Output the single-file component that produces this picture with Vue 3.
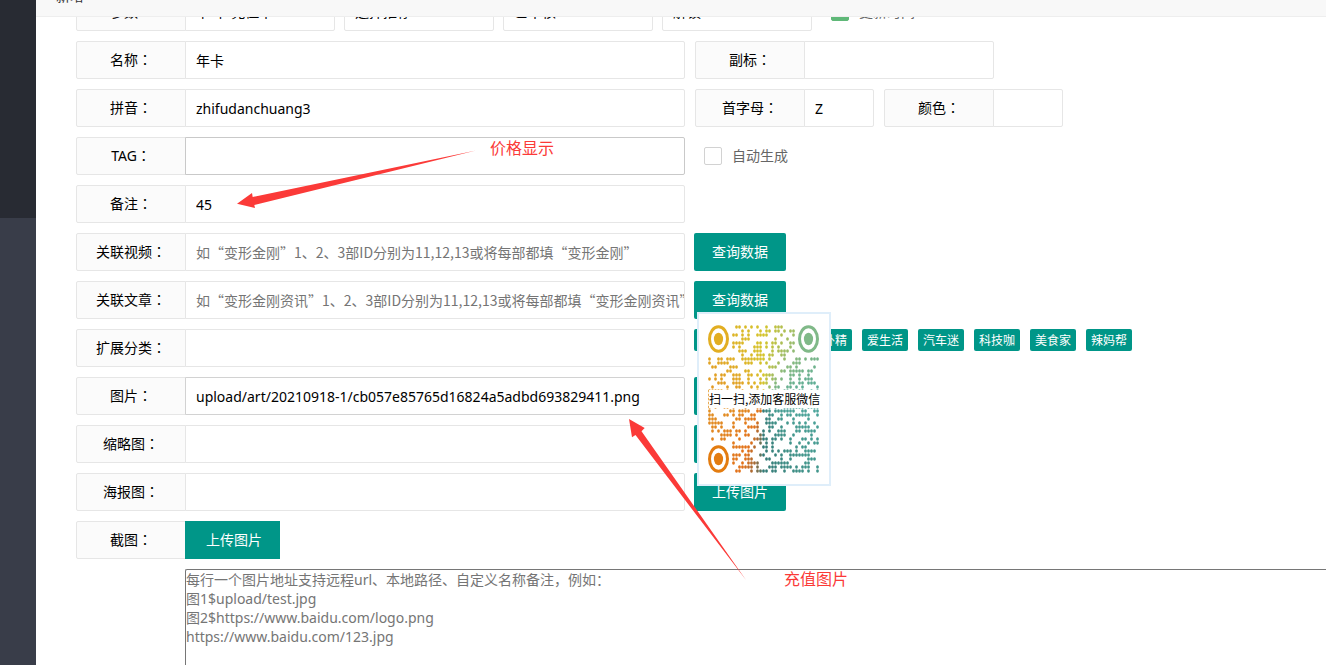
<script setup>
import { reactive } from 'vue'

const selects = [
  { id: 'type', text: '卡 卡 充值卡' },
  { id: 'level', text: '选择推荐' },
  { id: 'status', text: '已审核' },
  { id: 'lock', text: '解锁' }
]

const form = reactive({
  name: '年卡', sub: '', en: 'zhifudanchuang3', letter: 'Z', color: '', tag: '', remarks: '45',
  relVod: '', relArt: '', extend: '',
  pic: 'upload/art/20210918-1/cb057e85765d16824a5adbd693829411.png',
  thumb: '', slide: '', shots: ''
})

const related = [
  { key: 'relVod', label: '关联视频', hint: '如“变形金刚”1、2、3部ID分别为11,12,13或将每部都填“变形金刚”' },
  { key: 'relArt', label: '关联文章', hint: '如“变形金刚资讯”1、2、3部ID分别为11,12,13或将每部都填“变形金刚资讯”' }
]
const tags = ['段子手', '私房话', '八卦精', '爱生活', '汽车迷', '科技咖', '美食家', '辣妈帮']
const pictures = [
  { key: 'pic', label: '图片', active: true },
  { key: 'thumb', label: '缩略图' },
  { key: 'slide', label: '海报图' }
]
const shotsHint = '每行一个图片地址支持远程url、本地路径、自定义名称备注，例如：\n图1$upload/test.jpg\n图2$https://www.baidu.com/logo.png\nhttps://www.baidu.com/123.jpg'

// Colour wheel of the code: clockwise stops, degrees from twelve o'clock.
const stops = [
  [0, [212, 196, 42]], [45, [135, 185, 125]], [90, [78, 168, 158]], [135, [66, 150, 140]],
  [180, [52, 122, 118]], [190, [160, 105, 55]], [202, [226, 112, 24]], [270, [226, 148, 36]],
  [315, [224, 174, 36]], [360, [212, 196, 42]]
]
function wheel(x, y) {
  const a = (Math.atan2(x - 18, 18 - y) * 180 / Math.PI + 360) % 360
  const i = stops.findIndex((s, k) => k && a <= s[0])
  const [a0, c0] = stops[i - 1]
  const [a1, c1] = stops[i]
  const t = (a - a0) / (a1 - a0)
  return `rgb(${c0.map((c, k) => Math.round(c + (c1[k] - c) * t)).join(',')})`
}
const dots = []
let seed = 2021
for (let y = 0; y < 37; y++) {
  for (let x = 0; x < 37; x++) {
    seed = (seed * 16807) % 2147483647
    const eye = (x < 8 && y < 8) || (x > 28 && y < 8) || (x < 8 && y > 28)
    if (!eye && seed / 2147483647 < 0.49) dots.push({ x: x * 3 + 1.5, y: y * 4 + 2, fill: wheel(x, y) })
  }
}
const eyes = [
  { x: 10.5, y: 14, color: '#e2ae22' },
  { x: 100.5, y: 14, color: '#80b988' },
  { x: 10.5, y: 134, color: '#e37c10' }
]
</script>

<template>
  <div class="shell">
    <aside class="side"><div class="side-menu"></div></aside>
    <main class="main">
      <header class="title">新增</header>
      <div class="viewport">
        <form class="form" @submit.prevent>
          <div class="row tight">
            <div class="field">
              <label class="label" for="type">参数<span class="colon">：</span></label>
              <select id="type" class="input w150"><option>{{ selects[0].text }}</option></select>
            </div>
            <select v-for="s in selects.slice(1)" :id="s.id" :key="s.id" class="input w150" :aria-label="s.text">
              <option>{{ s.text }}</option>
            </select>
            <label class="check"><input type="checkbox" checked>更新时间</label>
          </div>

          <div class="row">
            <div class="field wide"><label class="label" for="name">名称<span class="colon">：</span></label><input id="name" v-model="form.name" class="input"></div>
            <div class="field"><label class="label" for="sub">副标<span class="colon">：</span></label><input id="sub" v-model="form.sub" class="input w190"></div>
          </div>
          <div class="row">
            <div class="field wide"><label class="label" for="en">拼音<span class="colon">：</span></label><input id="en" v-model="form.en" class="input"></div>
            <div class="field"><label class="label" for="letter">首字母<span class="colon">：</span></label><input id="letter" v-model="form.letter" class="input w70"></div>
            <div class="field"><label class="label" for="color">颜色<span class="colon">：</span></label><input id="color" v-model="form.color" class="input w70"></div>
          </div>
          <div class="row tight">
            <div class="field wide"><label class="label" for="tag">TAG<span class="colon">：</span></label><input id="tag" v-model="form.tag" class="input hover"></div>
            <label class="check"><input type="checkbox">自动生成</label>
          </div>
          <div class="row">
            <div class="field wide"><label class="label" for="remarks">备注<span class="colon">：</span></label><input id="remarks" v-model="form.remarks" class="input"></div>
          </div>
          <div v-for="r in related" :key="r.key" class="row tight">
            <div class="field wide">
              <label class="label" :for="r.key">{{ r.label }}<span class="colon">：</span></label>
              <input :id="r.key" v-model="form[r.key]" class="input cjk" :placeholder="r.hint">
            </div>
            <button type="button" class="btn">查询数据</button>
          </div>
          <div class="row tight">
            <div class="field wide"><label class="label" for="extend">扩展分类<span class="colon">：</span></label><input id="extend" v-model="form.extend" class="input"></div>
            <div class="tags"><button v-for="t in tags" :key="t" type="button" class="tag">{{ t }}</button></div>
          </div>
          <div v-for="p in pictures" :key="p.key" class="row tight">
            <div class="field wide">
              <label class="label" :for="p.key">{{ p.label }}<span class="colon">：</span></label>
              <input :id="p.key" v-model="form[p.key]" class="input" :class="{ focus: p.active }">
            </div>
            <button type="button" class="btn">上传图片</button>
          </div>
          <div class="row">
            <div class="field"><label class="label" for="shots">截图<span class="colon">：</span></label><button type="button" class="btn joined">上传图片</button></div>
          </div>
          <textarea id="shots" v-model="form.shots" class="area" :placeholder="shotsHint"></textarea>
        </form>
      </div>
    </main>

    <div class="qr">
      <svg class="code" viewBox="0 0 111 148" width="111" height="148" aria-hidden="true">
        <ellipse v-for="(d, i) in dots" :key="i" :cx="d.x" :cy="d.y" rx="1.4" ry="1.8" :fill="d.fill" />
        <g v-for="e in eyes" :key="e.color">
          <ellipse :cx="e.x" :cy="e.y" rx="9" ry="12.3" fill="none" :stroke="e.color" stroke-width="3" />
          <ellipse :cx="e.x" :cy="e.y" rx="4.6" ry="6.2" :fill="e.color" />
        </g>
      </svg>
      <span class="qr-text">扫一扫,添加客服微信</span>
    </div>

    <svg class="arrow price" viewBox="237 150 240 60" width="240" height="60" aria-hidden="true">
      <path d="M237 203.7 252 193 252.7 197 476 150.5 254.3 205 255 208Z" />
    </svg>
    <span class="note price-note">价格显示</span>
    <svg class="arrow image" viewBox="628 418 120 164" width="120" height="164" aria-hidden="true">
      <path d="M629 419 644.7 428 641.5 431.3 746 580 635.5 435 632 437.3Z" />
    </svg>
    <span class="note image-note">充值图片</span>
  </div>
</template>

<style>
body { margin: 0; background: #fff; }
</style>

<style scoped>
.shell {
  position: relative;
  display: flex;
  height: 100vh;
  overflow: hidden;
  font: 14px/20px "Noto Sans", "Noto Sans CJK SC", sans-serif;
  color: #000;
}
.shell * { box-sizing: border-box; }
.side { flex: 0 0 36px; background: #393d49; }
.side-menu { height: 218px; background: #282b33; }
.main { flex: 1; min-width: 0; display: flex; flex-direction: column; }
.title {
  flex: none;
  height: 42px;
  margin-top: -25px;
  padding-left: 20px;
  line-height: 42px;
  color: #333;
  background: #f8f8f8;
  border-bottom: 1px solid #eee;
}
.viewport { flex: 1; min-height: 0; overflow: hidden; }
.form { margin-top: -24px; padding-left: 40px; }
.row { display: flex; gap: 10px; margin-bottom: 10px; }
.tight { gap: 9px; }
.field { display: flex; }
.wide { flex: 0 0 609px; }
.label {
  flex: 0 0 110px;
  height: 38px;
  margin-right: -1px;
  line-height: 36px;
  text-align: center;
  white-space: nowrap;
  background: #fbfbfb;
  border: 1px solid #e6e6e6;
  border-radius: 2px 0 0 2px;
}
.colon { font-family: "Noto Sans CJK TC", sans-serif; line-height: 20px; }
.input {
  flex: 1;
  position: relative;
  min-width: 0;
  height: 38px;
  margin: 0;
  padding: 0 0 0 10px;
  font: inherit;
  color: #000;
  background: #fff;
  border: 1px solid #e6e6e6;
  border-radius: 2px;
  outline: none;
  appearance: none;
}
.field .input { border-radius: 0 2px 2px 0; }
.input::placeholder, .area::placeholder { color: #757575; opacity: 1; }
.hover { border-color: #c9c9c9; }
.focus { border-color: #d2d2d2; }
.field .cjk { font-family: "Noto Sans CJK SC", sans-serif; }
.w150 { flex: 0 0 150px; }
.w190 { flex: 0 0 190px; }
.w70 { flex: 0 0 70px; }
.check { display: flex; align-items: center; gap: 10px; margin-left: 10px; color: #666; }
.check input {
  width: 18px;
  height: 18px;
  margin: 0;
  appearance: none;
  background: #fff;
  border: 1px solid #d2d2d2;
  border-radius: 2px;
}
.check input:checked { background: #5fb878; border-color: #5fb878; }
.btn {
  height: 38px;
  padding: 0 18px;
  font: inherit;
  color: #fff;
  white-space: nowrap;
  background: #009688;
  border: 0;
  border-radius: 2px;
}
.joined { position: relative; padding: 0 18px 0 21px; border-radius: 0; }
.tags { display: flex; gap: 10px; align-items: flex-start; }
.tag {
  height: 22px;
  padding: 0 5px;
  font: 12px/22px "Noto Sans CJK SC", sans-serif;
  color: #fff;
  white-space: nowrap;
  background: #009688;
  border: 0;
  border-radius: 2px;
}
.area {
  display: block;
  width: calc(100% - 109px);
  height: 150px;
  margin: 0 0 0 109px;
  padding: 0;
  font: inherit;
  line-height: 19px;
  border: 1px solid #767676;
  border-right: 0;
  border-radius: 2px 0 0 2px;
  outline: none;
  resize: none;
}
.qr {
  position: absolute;
  left: 697px;
  top: 312px;
  width: 134px;
  height: 174px;
  padding: 11px 9px;
  background: #fff;
  border: 2px solid #dfeefa;
}
.code { display: block; }
.qr-text {
  position: absolute;
  left: 10px;
  top: 76px;
  font: 12px/18px "Noto Sans CJK SC", sans-serif;
  white-space: nowrap;
  background: #fff;
}
.arrow { position: absolute; fill: #fb3a38; }
.price { left: 237px; top: 150px; }
.image { left: 628px; top: 418px; }
.note { position: absolute; font-size: 16px; color: #fb3a38; white-space: nowrap; }
.price-note { left: 490px; top: 138px; }
.image-note { left: 784px; top: 569px; }
</style>
